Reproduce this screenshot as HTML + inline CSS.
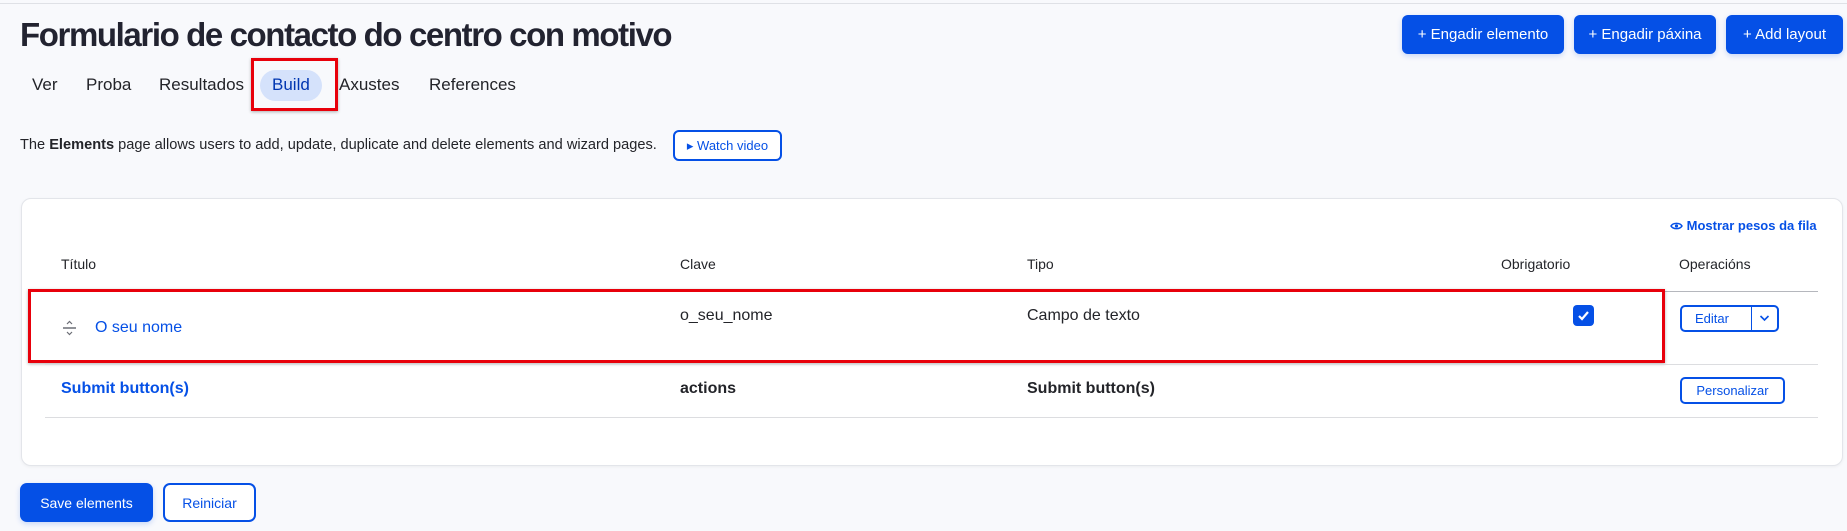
<!DOCTYPE html>
<html><head><meta charset="utf-8"><style>
*{box-sizing:border-box;margin:0;padding:0}
body{width:1847px;height:531px;background:#f8f9fc;font-family:"Liberation Sans",sans-serif;color:#232429;position:relative;overflow:hidden}
.a{position:absolute;white-space:nowrap}
.btn{position:absolute;background:#0550e6;color:#fff;border-radius:6px;font-size:15px;display:flex;align-items:center;justify-content:center;box-shadow:0 2px 6px rgba(5,80,230,.2)}
.obtn{position:absolute;border:2px solid #0550e6;color:#0550e6;border-radius:5px;background:#fff;display:flex;align-items:center;justify-content:center;font-size:13px}
.tab{position:absolute;top:75px;font-size:17px;color:#232429}
.th{position:absolute;top:256px;font-size:14px;color:#232429}
.line{position:absolute;left:45px;width:1773px;height:1px;background:#dcdde0}
</style></head><body>
<div class="a" style="left:0;top:3px;width:1847px;height:1px;background:#dfe1e6"></div>
<div class="a" style="left:20px;top:16px;font-size:33px;font-weight:600;letter-spacing:-1.4px;color:#222330">Formulario de contacto do centro con motivo</div>
<div class="btn" style="left:1402px;top:15px;width:162px;height:39px">+ Engadir elemento</div>
<div class="btn" style="left:1574px;top:15px;width:142px;height:39px">+ Engadir páxina</div>
<div class="btn" style="left:1726px;top:15px;width:117px;height:39px">+ Add layout</div>

<div class="tab" style="left:32px">Ver</div>
<div class="tab" style="left:86px">Proba</div>
<div class="tab" style="left:159px">Resultados</div>
<div class="a" style="left:260px;top:70px;width:62px;height:31px;border-radius:16px;background:#d5e2fb"></div>
<div class="tab" style="left:272px;color:#0036b1">Build</div>
<div class="a" style="left:251px;top:58px;width:87px;height:53px;border:3px solid #e8000b;box-shadow:0 1px 3px rgba(0,0,0,.3)"></div>
<div class="tab" style="left:339px">Axustes</div>
<div class="tab" style="left:429px">References</div>

<div class="a" style="left:20px;top:137px;font-size:14.6px">The <b>Elements</b> page allows users to add, update, duplicate and delete elements and wizard pages.</div>
<div class="obtn" style="left:673px;top:130px;width:109px;height:31px;border-radius:6px;font-size:13px">▸ Watch video</div>

<div class="a" style="left:21px;top:198px;width:1822px;height:268px;background:#fff;border:1px solid #e3e5ea;border-radius:10px;box-shadow:0 1px 3px rgba(0,0,0,.05)"></div>
<div class="a" style="left:1670px;top:218px;font-size:13px;font-weight:bold;color:#0550e6">
<svg width="13" height="10" viewBox="0 0 13 10" style="vertical-align:-1px"><path d="M1 5C3 1.5 10 1.5 12 5C10 8.5 3 8.5 1 5Z" fill="none" stroke="#0550e6" stroke-width="1.5"/><circle cx="6.5" cy="5" r="1.6" fill="#0550e6"/></svg> Mostrar pesos da fila</div>

<div class="th" style="left:61px">Título</div>
<div class="th" style="left:680px">Clave</div>
<div class="th" style="left:1027px">Tipo</div>
<div class="th" style="left:1501px">Obrigatorio</div>
<div class="th" style="left:1679px">Operacións</div>
<div class="line" style="top:291px;background:#b5b7bd"></div>

<svg class="a" style="left:62px;top:320px" width="15" height="16" viewBox="0 0 15 16"><path d="M5 4L7.5 1.5L10 4M5 12L7.5 14.5L10 12" fill="none" stroke="#6b6d75" stroke-width="1.2"/><path d="M1 8H14" stroke="#6b6d75" stroke-width="1.5"/></svg>
<div class="a" style="left:95px;top:319px;font-size:16px;color:#0550e6">O seu nome</div>
<div class="a" style="left:680px;top:307px;font-size:16px">o_seu_nome</div>
<div class="a" style="left:1027px;top:307px;font-size:16px">Campo de texto</div>
<div class="a" style="left:1573px;top:305px;width:21px;height:21px;background:#0550e6;border-radius:4px"></div>
<svg class="a" style="left:1577px;top:309px" width="13" height="13" viewBox="0 0 13 13"><path d="M2 7L5 10L11 3" fill="none" stroke="#fff" stroke-width="2.2"/></svg>
<div class="obtn" style="left:1680px;top:305px;width:99px;height:27px;justify-content:flex-start;padding-left:13px">Editar</div>
<div class="a" style="left:1751px;top:307px;width:1px;height:23px;background:#0550e6"></div>
<svg class="a" style="left:1759px;top:314px" width="11" height="8" viewBox="0 0 11 8"><path d="M1.5 2L5.5 6L9.5 2" fill="none" stroke="#0550e6" stroke-width="1.6"/></svg>
<div class="a" style="left:28px;top:289px;width:1637px;height:74px;border:3px solid #e8000b;box-shadow:0 1px 3px rgba(0,0,0,.3)"></div>
<div class="line" style="top:364px"></div>

<div class="a" style="left:61px;top:380px;font-size:16px;font-weight:bold;color:#0550e6">Submit button(s)</div>
<div class="a" style="left:680px;top:380px;font-size:16px;font-weight:bold">actions</div>
<div class="a" style="left:1027px;top:380px;font-size:16px;font-weight:bold">Submit button(s)</div>
<div class="obtn" style="left:1680px;top:377px;width:105px;height:27px">Personalizar</div>
<div class="line" style="top:417px"></div>

<div class="btn" style="left:20px;top:483px;width:133px;height:39px;font-size:14px;border-radius:7px">Save elements</div>
<div class="obtn" style="left:163px;top:483px;width:93px;height:39px;font-size:14px;border-radius:7px">Reiniciar</div>
</body></html>
